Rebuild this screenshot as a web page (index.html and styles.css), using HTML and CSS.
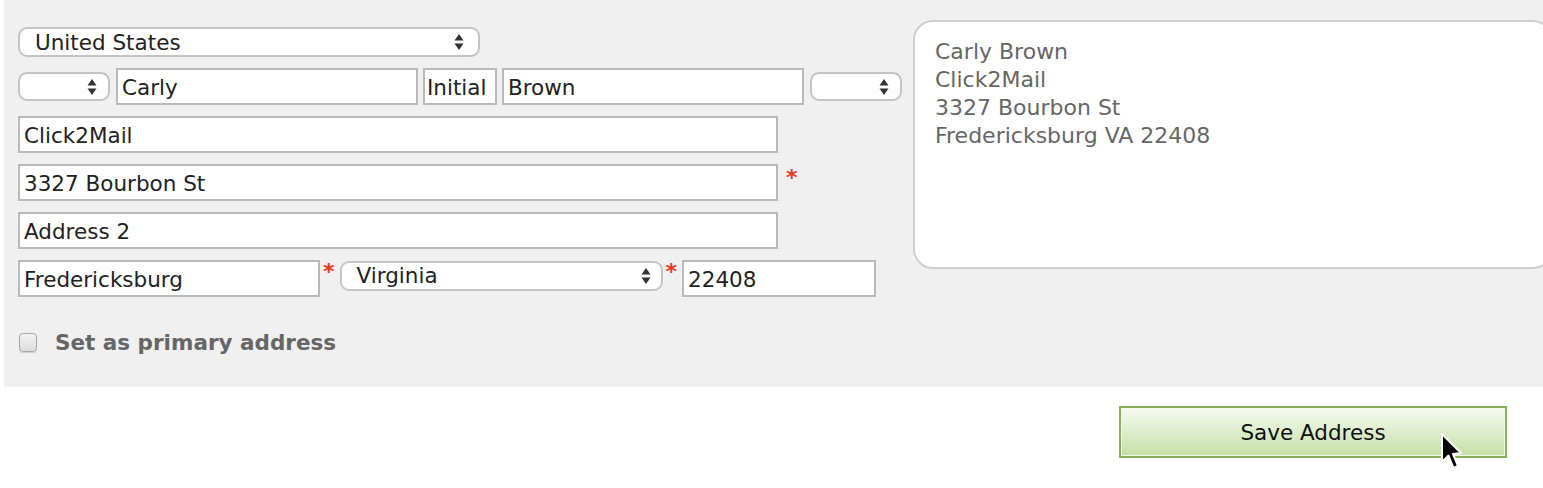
FILE: index.html
```html
<!DOCTYPE html>
<html lang="en">
<head>
    <meta charset="utf-8">
    <title>Edit Address</title>
    <link rel="stylesheet" href="styles.css">
</head>
<body>
<div class="address-panel">
    <form class="address-form">
        <div class="row">
            <div class="select select-country">
                <span>United States</span>
                <svg class="arrows" width="10" height="18" viewBox="0 0 10 18"><path d="M5 1 L9.5 7.5 H0.5 Z M5 17 L9.5 10.5 H0.5 Z" fill="#333"/></svg>
            </div>
        </div>

        <div class="row row-name">
            <div class="select select-small">
                <span></span>
                <svg class="arrows" width="10" height="18" viewBox="0 0 10 18"><path d="M5 1 L9.5 7.5 H0.5 Z M5 17 L9.5 10.5 H0.5 Z" fill="#333"/></svg>
            </div>
            <input type="text" class="field field-name" value="Carly">
            <input type="text" class="field field-initial" value="Initial">
            <input type="text" class="field field-name" value="Brown">
            <div class="select select-small">
                <span></span>
                <svg class="arrows" width="10" height="18" viewBox="0 0 10 18"><path d="M5 1 L9.5 7.5 H0.5 Z M5 17 L9.5 10.5 H0.5 Z" fill="#333"/></svg>
            </div>
        </div>

        <div class="row">
            <input type="text" class="field field-wide" value="Click2Mail">
        </div>

        <div class="row">
            <input type="text" class="field field-wide" value="3327 Bourbon St">
            <span class="required">*</span>
        </div>

        <div class="row">
            <input type="text" class="field field-wide" value="Address 2">
        </div>

        <div class="row row-city">
            <input type="text" class="field field-city" value="Fredericksburg">
            <span class="required">*</span>
            <div class="select select-state">
                <span>Virginia</span>
                <svg class="arrows" width="10" height="18" viewBox="0 0 10 18"><path d="M5 1 L9.5 7.5 H0.5 Z M5 17 L9.5 10.5 H0.5 Z" fill="#333"/></svg>
            </div>
            <span class="required">*</span>
            <input type="text" class="field field-zip" value="22408">
        </div>

        <label class="primary">
            <span class="checkbox"></span>
            Set as primary address
        </label>
    </form>

    <div class="preview">
        Carly Brown<br>
        Click2Mail<br>
        3327 Bourbon St<br>
        Fredericksburg VA 22408
    </div>
</div>

<div class="actions">
    <button class="save-btn" type="button">Save Address</button>
    <svg class="cursor" width="24" height="40" viewBox="0 0 24 40">
        <path d="M2 2 L2 30 L8.5 23.5 L13.5 36 L18 34 L13 22 L21 21 Z" fill="#000" stroke="#fff" stroke-width="2" stroke-linejoin="round"/>
    </svg>
</div>
</body>
</html>
```

FILE: styles.css
```css
body {
    margin: 0;
    padding: 0;
    font-family: "DejaVu Sans", Verdana, sans-serif;
    background: #fff;
    color: #222;
}

.address-panel {
    margin-left: 4px;
    height: 387px;
    background: #f0f0f0;
    display: flex;
    align-items: flex-start;
    overflow: hidden;
}

.address-form {
    flex: none;
    padding: 27px 0 0 14px;
    width: 895px;
    display: flex;
    flex-direction: column;
    gap: 11px;
}

.row {
    display: flex;
    align-items: center;
    gap: 6px;
    height: 37px;
}

.row:first-child {
    height: 30px;
}

.field {
    box-sizing: border-box;
    height: 37px;
    margin: 0;
    padding: 2px 4px 0;
    border: 2px solid #b9b9b9;
    background: #fff;
    font-family: "DejaVu Sans", Verdana, sans-serif;
    font-size: 21.5px;
    color: #222;
    outline: none;
}

.field-name {
    width: 302px;
}

.field-initial {
    width: 74px;
    margin: 0 -1px;
    padding: 2px 2px 0;
}

.field-wide {
    width: 760px;
}

.field-city {
    width: 302px;
}

.field-zip {
    width: 194px;
}

.select {
    box-sizing: border-box;
    display: flex;
    align-items: center;
    justify-content: space-between;
    height: 30px;
    padding: 0 14px 0 15px;
    border: 2px solid #c4c4c4;
    border-radius: 9px;
    background: #fff;
    font-size: 21.5px;
    color: #222;
}

.select-country {
    width: 462px;
}

.select-small {
    width: 92px;
    height: 29px;
    padding-right: 11px;
}

.select-state {
    width: 323px;
    margin-top: -6px;
    padding-right: 10px;
}

.arrows {
    flex: none;
}

.required {
    color: #e8391d;
    font-size: 22px;
    font-weight: bold;
    align-self: flex-start;
    margin: 3px 0 0 2px;
    line-height: 22px;
}

.row-city {
    gap: 3px;
}

.row-city .required {
    margin: 1px 2px 0 0;
}

.primary {
    display: flex;
    align-items: center;
    gap: 18px;
    margin: 22px 0 0 1px;
    font-size: 21.5px;
    font-weight: bold;
    color: #666;
}

.checkbox {
    box-sizing: border-box;
    width: 18px;
    height: 19px;
    border: 1px solid #a8a8a8;
    border-radius: 4px;
    background: linear-gradient(#f4f4f4, #dcdcdc);
    box-shadow: 0 1px 1px rgba(0, 0, 0, 0.15);
}

.preview {
    flex: none;
    box-sizing: border-box;
    margin-top: 20px;
    width: 640px;
    height: 249px;
    padding: 16px 20px;
    border: 2px solid #cfcfcf;
    border-radius: 20px;
    background: #fff;
    font-family: "DejaVu Sans", Tahoma, sans-serif;
    font-size: 22px;
    line-height: 28px;
    color: #666;
}

.actions {
    position: relative;
    display: flex;
    justify-content: flex-end;
    padding: 19px 36px 31px 0;
}

.save-btn {
    width: 388px;
    height: 52px;
    border: 2px solid #8bae5c;
    box-shadow: inset 0 0 0 1px #f4f9ee;
    background: linear-gradient(#f6faf2, #c4e0a5);
    font-family: "DejaVu Sans", Verdana, sans-serif;
    font-size: 21.5px;
    color: #111;
    cursor: pointer;
}

/* mouse pointer from the screenshot */
.cursor {
    position: absolute;
    left: 1440px;
    top: 45px;
}
```
